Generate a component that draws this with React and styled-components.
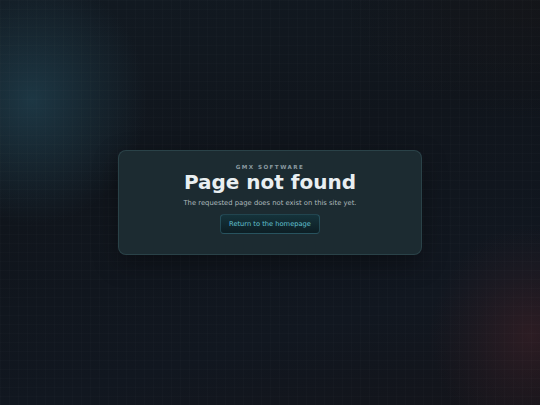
import React from "react";
import styled, { createGlobalStyle } from "styled-components";

const Global = createGlobalStyle`
  html, body { margin: 0; padding: 0; background: #10161d; }
  * { box-sizing: border-box; }
`;

const Page = styled.main`
  position: relative;
  width: 100vw;
  height: 100vh;
  overflow: hidden;
  display: flex;
  align-items: center;
  justify-content: center;
  font-family: "DejaVu Sans", "Noto Sans", sans-serif;
  background:
    radial-gradient(ellipse 115px 125px at 32px 100px, rgba(36, 74, 90, 0.62) 0%, rgba(36, 74, 90, 0.3) 50%, rgba(36, 74, 90, 0) 100%),
    radial-gradient(ellipse 100px 110px at 530px 335px, rgba(66, 34, 40, 0.55) 0%, rgba(66, 34, 40, 0.22) 55%, rgba(66, 34, 40, 0) 100%),
    linear-gradient(165deg, #121a22 0%, #10151c 40%, #111720 75%, #13141a 100%);
  &::after {
    content: "";
    position: absolute;
    inset: 0;
    background: radial-gradient(ellipse 200px 120px at 540px 0px, rgba(22, 20, 22, 0.6), rgba(22, 20, 22, 0));
    pointer-events: none;
  }
  &::before {
    content: "";
    position: absolute;
    inset: 0;
    background-image:
      linear-gradient(rgba(255, 255, 255, 0.011) 1px, transparent 1px),
      linear-gradient(90deg, rgba(255, 255, 255, 0.011) 1px, transparent 1px);
    background-size: 9px 9px;
    pointer-events: none;
    z-index: 1;
  }
`;

const Card = styled.section`
  position: relative;
  z-index: 2;
  width: 304px;
  padding: 12.5px 16px 20px;
  border-radius: 8px;
  background: #1c2b31;
  border: 1px solid rgba(110, 170, 180, 0.18);
  box-shadow: 0 8px 24px rgba(0, 0, 0, 0.35);
  display: flex;
  flex-direction: column;
  align-items: center;
  text-align: center;
`;

const Eyebrow = styled.div`
  font-size: 5.6px;
  line-height: 8px;
  font-weight: 700;
  letter-spacing: 1.45px;
  color: #8b9ba1;
  text-transform: uppercase;
`;

const Title = styled.h1`
  margin: 0;
  font-size: 20px;
  line-height: 22px;
  font-weight: 700;
  color: #e9eff1;
`;

const Subtitle = styled.p`
  margin: 5px 0 0;
  font-size: 6.8px;
  line-height: 10px;
  color: #adb9bd;
`;

const HomeLink = styled.a`
  margin-top: 6px;
  height: 20px;
  padding: 0 8px;
  display: inline-flex;
  align-items: center;
  border-radius: 4px;
  border: 1px solid rgba(90, 170, 190, 0.28);
  background: linear-gradient(180deg, #15333b 0%, #0d1e24 100%);
  color: #62c3d3;
  font-size: 6.7px;
  text-decoration: none;
`;

export default function App() {
  return (
    <>
      <Global />
      <Page>
        <Card>
          <Eyebrow>GMX Software</Eyebrow>
          <Title>Page not found</Title>
          <Subtitle>The requested page does not exist on this site yet.</Subtitle>
          <HomeLink href="#">Return to the homepage</HomeLink>
        </Card>
      </Page>
    </>
  );
}
